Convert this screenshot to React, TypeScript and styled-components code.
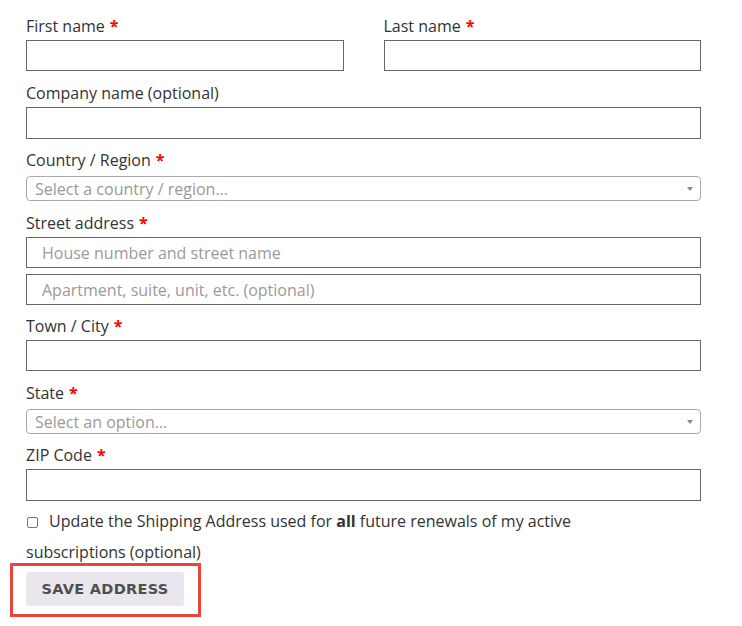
import React from "react";
import styled, { createGlobalStyle } from "styled-components";

const Global = createGlobalStyle`
  html, body { margin: 0; padding: 0; background: #fff; }
  body { font-family: "Open Sans", "Liberation Sans", sans-serif; color: #333; }
  * { box-sizing: border-box; }
`;

const Form = styled.form`
  width: 742px;
  padding: 14px 41px 0 26px;
  display: flex;
  flex-direction: column;
`;

const Row = styled.div`
  display: grid;
  grid-template-columns: 1fr 1fr;
  column-gap: 40px;
`;

const Field = styled.div<{ $mb?: number }>`
  display: flex;
  flex-direction: column;
  margin-bottom: ${(p) => (p.$mb ?? 10)}px;
`;

const Label = styled.label`
  font-size: 16px;
  line-height: 22px;
  height: 22px;
  padding-top: 1px;
  color: #333;
  margin-bottom: 4px;
`;

const Req = styled.span`
  color: #f00;
  font-weight: 700;
  margin-left: 5px;
`;

const TextInput = styled.input<{ $h?: number; $mt?: number }>`
  display: block;
  width: 100%;
  height: ${(p) => p.$h ?? 31}px;
  margin: ${(p) => p.$mt ?? 0}px 0 0 0;
  border: 1px solid #666;
  border-radius: 0;
  padding: 0 15px;
  font-family: "Open Sans", "Liberation Sans", sans-serif;
  font-size: 16px;
  color: #333;
  background: #fff;
  outline: none;
  &::placeholder { color: #9a9a9a; }
`;

const SelectBox = styled.div`
  position: relative;
  height: 25px;
  margin-top: 2px;
  border: 1px solid #aaa;
  border-radius: 4px;
  background: #fff;
  display: flex;
  align-items: center;
  padding-left: 8px;
  font-size: 16px;
  color: #999;
`;

const Arrow = styled.span`
  position: absolute;
  right: 7px;
  top: 10px;
  width: 0;
  height: 0;
  border-left: 3px solid transparent;
  border-right: 3px solid transparent;
  border-top: 4px solid #888;
`;

const CheckRow = styled.p`
  margin: 0;
  font-size: 16px;
  line-height: 31px;
  color: #333;
  padding-top: 2px;
  padding-right: 120px;
`;

const Check = styled.input`
  appearance: none;
  width: 11px;
  height: 11px;
  margin: 0 11px 0 1px;
  border: 1px solid #777;
  border-radius: 2px;
  background: #fff;
  vertical-align: -1px;
`;

const Highlight = styled.div`
  align-self: flex-start;
  margin: -5px 0 0 -16px;
  border: 3px solid #e9443e;
  padding: 6px 14px 8px 13px;
`;

const SaveButton = styled.button`
  display: block;
  width: 158px;
  height: 34px;
  border: 0;
  border-radius: 3px;
  background: #e9e6ed;
  color: #4f4f4f;
  font-family: "DejaVu Sans", "Open Sans", sans-serif;
  font-weight: 700;
  font-size: 14.5px;
  letter-spacing: 0.3px;
  text-transform: uppercase;
  padding: 0;
`;

export default function App() {
  return (
    <>
      <Global />
      <Form>
        <Row>
          <Field>
            <Label>First name<Req>*</Req></Label>
            <TextInput />
          </Field>
          <Field>
            <Label>Last name<Req>*</Req></Label>
            <TextInput />
          </Field>
        </Row>
        <Field $mb={9}>
          <Label>Company name (optional)</Label>
          <TextInput $h={32} />
        </Field>
        <Field $mb={10}>
          <Label>Country / Region<Req>*</Req></Label>
          <SelectBox>
            Select a country / region…
            <Arrow />
          </SelectBox>
        </Field>
        <Field $mb={9}>
          <Label>Street address<Req>*</Req></Label>
          <TextInput placeholder="House number and street name" />
          <TextInput $mt={6} placeholder="Apartment, suite, unit, etc. (optional)" />
        </Field>
        <Field $mb={10}>
          <Label>Town / City<Req>*</Req></Label>
          <TextInput />
        </Field>
        <Field $mb={9}>
          <Label>State<Req>*</Req></Label>
          <SelectBox>
            Select an option…
            <Arrow />
          </SelectBox>
        </Field>
        <Field $mb={3}>
          <Label>ZIP Code<Req>*</Req></Label>
          <TextInput $h={32} />
        </Field>
        <CheckRow>
          <Check type="checkbox" />
          Update the Shipping Address used for <b>all</b> future renewals of my active subscriptions (optional)
        </CheckRow>
        <Highlight>
          <SaveButton type="button">Save Address</SaveButton>
        </Highlight>
      </Form>
    </>
  );
}
